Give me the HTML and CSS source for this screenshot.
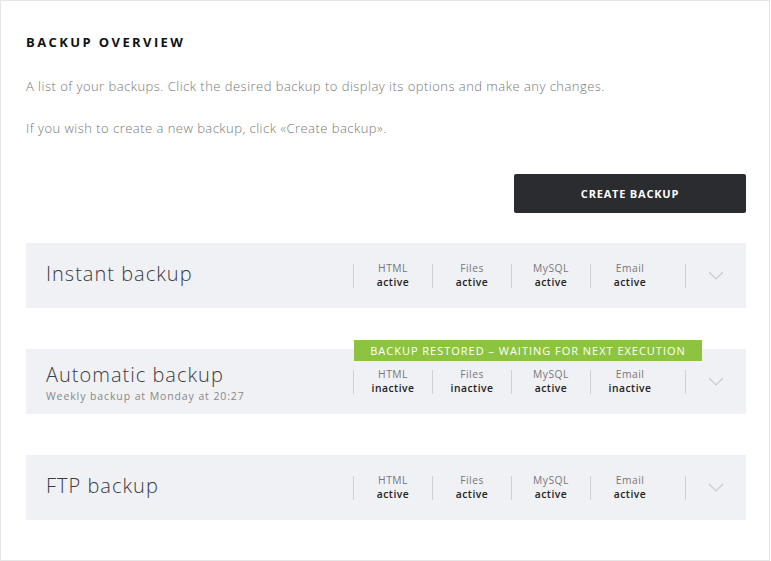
FILE: index.html
```html
<!DOCTYPE html>
<html lang="en">
<head>
  <meta charset="UTF-8">
  <meta name="viewport" content="width=device-width, initial-scale=1.0">
  <title>Backup overview</title>
  <link rel="stylesheet" href="styles.css">
</head>
<body>
  <div class="panel">
    <h2 class="panel-title">BACKUP OVERVIEW</h2>
    <p class="intro">A list of your backups. Click the desired backup to display its options and make any changes.</p>
    <p class="intro second">If you wish to create a new backup, click «Create backup».</p>

    <div class="actions">
      <button class="create-button">CREATE BACKUP</button>
    </div>

    <div class="backup-list">
      <div class="backup-card">
        <div class="backup-name">
          <div class="name">Instant backup</div>
        </div>
        <div class="status-col"><div class="label">HTML</div><div class="value">active</div></div>
        <div class="status-col"><div class="label">Files</div><div class="value">active</div></div>
        <div class="status-col"><div class="label">MySQL</div><div class="value">active</div></div>
        <div class="status-col"><div class="label">Email</div><div class="value">active</div></div>
        <div class="toggle">
          <svg width="16" height="9" viewBox="0 0 16 9"><polyline points="1,1 8,8 15,1" fill="none" stroke="#c9cace" stroke-width="1.2"/></svg>
        </div>
      </div>

      <div class="backup-card">
        <div class="badge">BACKUP RESTORED – WAITING FOR NEXT EXECUTION</div>
        <div class="backup-name has-sub">
          <div class="name">Automatic backup</div>
          <div class="sub">Weekly backup at Monday at 20:27</div>
        </div>
        <div class="status-col"><div class="label">HTML</div><div class="value">inactive</div></div>
        <div class="status-col"><div class="label">Files</div><div class="value">inactive</div></div>
        <div class="status-col"><div class="label">MySQL</div><div class="value">active</div></div>
        <div class="status-col"><div class="label">Email</div><div class="value">inactive</div></div>
        <div class="toggle">
          <svg width="16" height="9" viewBox="0 0 16 9"><polyline points="1,1 8,8 15,1" fill="none" stroke="#c9cace" stroke-width="1.2"/></svg>
        </div>
      </div>

      <div class="backup-card">
        <div class="backup-name">
          <div class="name">FTP backup</div>
        </div>
        <div class="status-col"><div class="label">HTML</div><div class="value">active</div></div>
        <div class="status-col"><div class="label">Files</div><div class="value">active</div></div>
        <div class="status-col"><div class="label">MySQL</div><div class="value">active</div></div>
        <div class="status-col"><div class="label">Email</div><div class="value">active</div></div>
        <div class="toggle">
          <svg width="16" height="9" viewBox="0 0 16 9"><polyline points="1,1 8,8 15,1" fill="none" stroke="#c9cace" stroke-width="1.2"/></svg>
        </div>
      </div>
    </div>
  </div>
</body>
</html>
```

FILE: styles.css
```css
body {
  margin: 0;
  font-family: "Open Sans", Arial, sans-serif;
  color: #333;
  background: #fff;
}

.panel {
  width: 720px;
  height: 526px;
  padding: 33px 23px 0 25px;
  border: 1px solid #e6e6e6;
}

.panel-title {
  margin: 0;
  font-size: 13px;
  line-height: 16px;
  font-weight: 700;
  letter-spacing: 2.4px;
  color: #111;
}

.intro {
  margin: 26px 0 0;
  font-size: 13px;
  line-height: 20px;
  font-weight: 300;
  letter-spacing: 0.47px;
  color: #777;
}

.intro.second {
  margin-top: 22px;
}

.actions {
  display: flex;
  justify-content: flex-end;
  margin-top: 36px;
}

.create-button {
  width: 232px;
  height: 39px;
  background: #2b2c30;
  color: #fff;
  border: none;
  border-radius: 2px;
  font-family: inherit;
  font-size: 11px;
  font-weight: 700;
  letter-spacing: 0.8px;
  cursor: pointer;
}

.backup-list {
  display: flex;
  flex-direction: column;
  gap: 41px;
  margin-top: 30px;
}

.backup-card {
  position: relative;
  display: flex;
  align-items: center;
  height: 65px;
  padding-left: 20px;
  background: #f0f1f5;
}

.backup-name {
  flex: 1;
  padding-bottom: 4px;
}

.backup-name.has-sub {
  padding-top: 8px;
}

.name {
  font-size: 20px;
  line-height: 22px;
  font-weight: 300;
  letter-spacing: 1px;
  color: #3a3b40;
}

.sub {
  margin-top: 3px;
  font-size: 10.5px;
  line-height: 14px;
  letter-spacing: 0.9px;
  color: #888;
}

.status-col {
  display: flex;
  flex-direction: column;
  justify-content: center;
  align-items: center;
  width: 78px;
  height: 23px;
  padding-bottom: 1px;
  border-left: 1px solid #cfd0d4;
  font-size: 10.3px;
  line-height: 14px;
  letter-spacing: 0.5px;
}

.label {
  color: #777;
}

.value {
  font-weight: 600;
  color: #222;
}

.toggle {
  display: flex;
  justify-content: center;
  align-items: center;
  width: 60px;
  height: 24px;
  margin-left: 16px;
  border-left: 1px solid #cfd0d4;
}

.badge {
  position: absolute;
  top: -9px;
  left: 328px;
  width: 348px;
  height: 21px;
  line-height: 21px;
  text-align: center;
  background: #8dc43f;
  color: #fff;
  font-size: 11px;
  letter-spacing: 0.98px;
}
```
